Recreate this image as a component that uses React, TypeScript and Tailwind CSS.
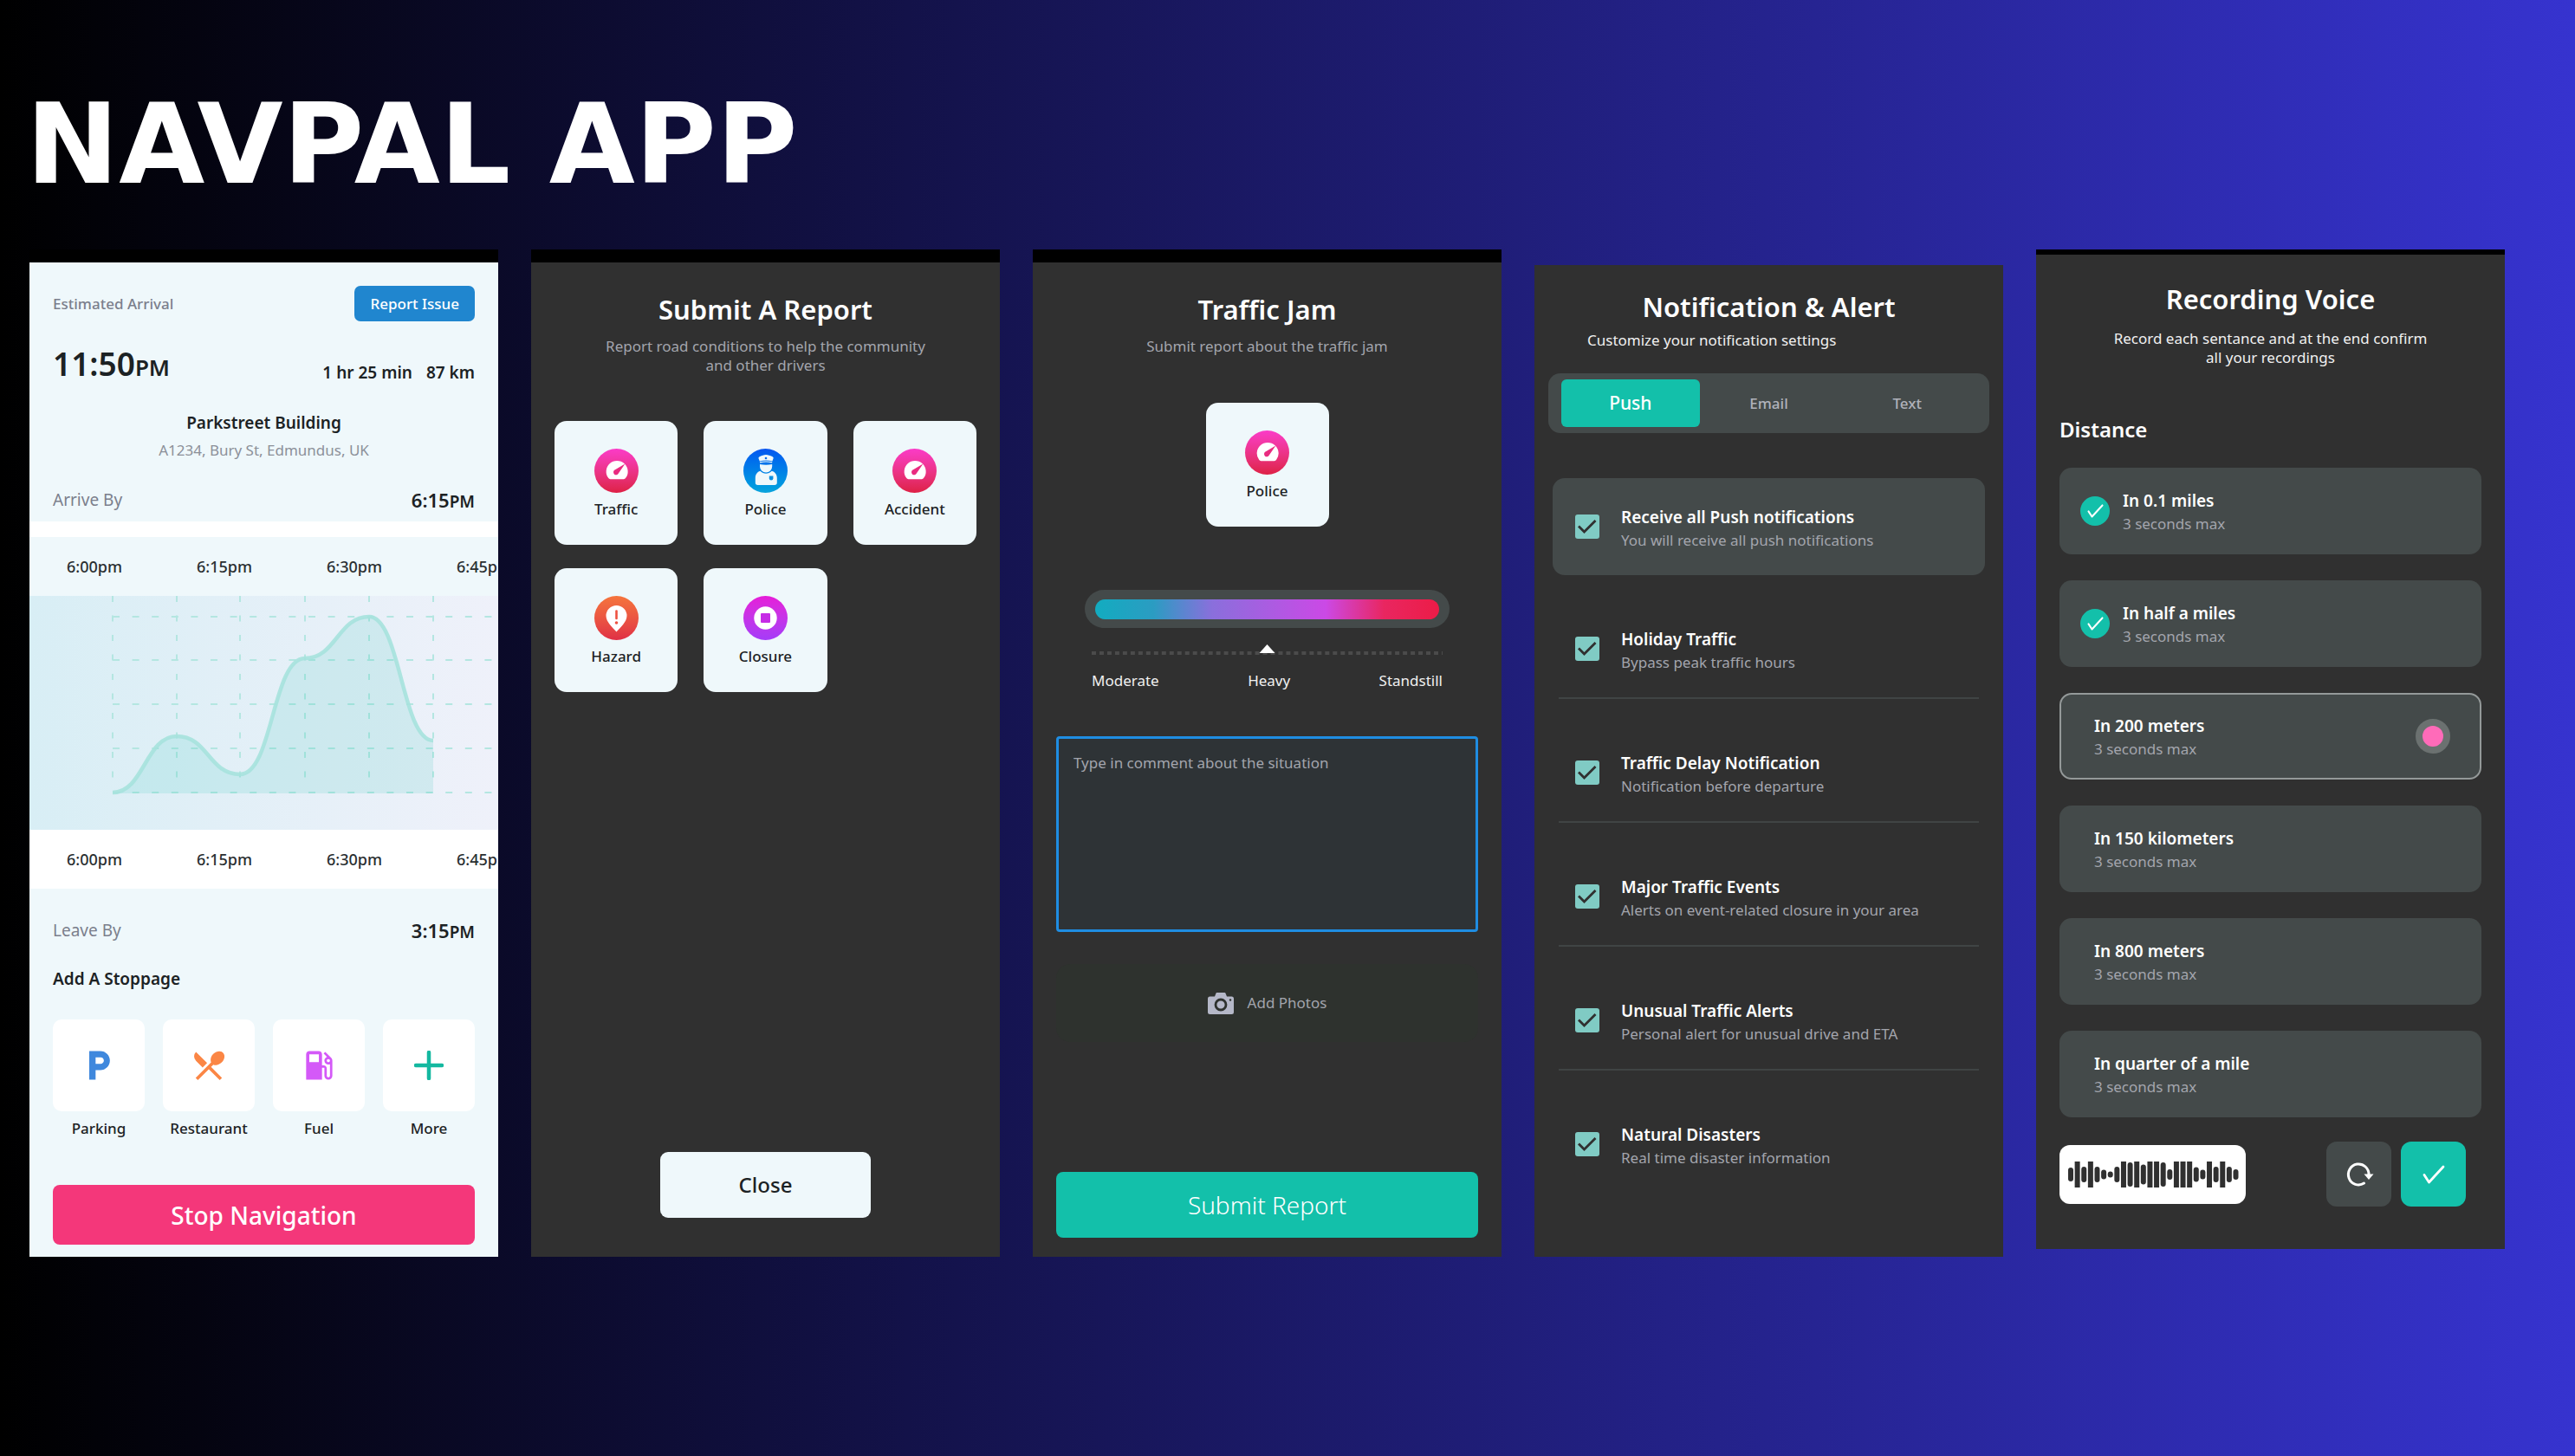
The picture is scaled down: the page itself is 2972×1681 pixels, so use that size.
import type { ReactNode } from "react";
import { MdLocalGasStation, MdLocalParking, MdRestaurantMenu } from "react-icons/md";

/* ---------- Icons ---------- */

function GaugeIcon() {
  return (
    <svg viewBox="0 0 51 51" className="size-[51px]" aria-hidden="true">
      <path
        d="M18.4 35.2c-.9 0-1.6-.4-2.1-1.1A12.5 12.5 0 1 1 36 34.1c-.5.7-1.2 1.1-2.1 1.1z"
        fill="#fff"
      />
      <path d="M35.4 17.6 28 28.3a3.1 3.1 0 1 1-4-4z" fill="#e92c80" />
    </svg>
  );
}

function PoliceIcon() {
  return (
    <svg viewBox="0 0 51 51" className="size-[51px]" aria-hidden="true">
      <path
        d="M17.6 11.6c-.4-1.2.3-2 1.5-2.5C21.3 8.1 23.5 7 26 7s4.900 1.100 7.200 2.100c1.200.5 1.800 1.300 1.300 2.500L33.400 14.400c-4.800-1.300-9.800-1.300-14.600 0z"
        fill="#eff8fb"
      />
      <circle cx="26" cy="11" r="1.3" fill="#0b6cec" />
      <path d="M19 15.900c4.600-1.200 9.600-1.200 14.200 0" stroke="#eff8fb" strokeWidth="1.1" fill="none" />
      <path d="M19 18c4.500 1 9.600 1 14.200 0v2.400a7.100 7.100 0 0 1-14.200 0z" fill="#eff8fb" />
      <path
        d="M19.400 25.800c3.800 4 9.600 4 13.400 0 3.600 1 6 4 6 8v5.400c0 1.800-1 2.800-2.800 2.800H16.600c-1.800 0-2.800-1-2.800-2.800v-5.400c0-4 2.200-7 5.600-8z"
        fill="#eff8fb"
      />
      <path d="M29.800 31.500h4.600v2.800a2.300 2.300 0 0 1-4.600 0z" fill="#0b8fe0" />
    </svg>
  );
}

function HazardIcon() {
  return (
    <svg viewBox="0 0 51 51" className="size-[51px]" aria-hidden="true">
      <path d="M25.500 41.500C21 36.500 13.500 30 13.500 23a12 12 0 0 1 24 0c0 7-7.500 13.500-12 18.500z" fill="#fff" />
      <path d="M25.500 17.500v8.500" stroke="#ee5240" strokeWidth="2.6" strokeLinecap="round" />
      <circle cx="25.5" cy="31" r="1.800" fill="#ee5240" />
    </svg>
  );
}

function ClosureIcon() {
  return (
    <svg viewBox="0 0 51 51" className="size-[51px]" aria-hidden="true">
      <circle cx="25.5" cy="25.5" r="13.2" fill="#fff" />
      <rect x="20" y="20" width="11" height="11" rx="1" fill="#c62be6" />
    </svg>
  );
}

function PlusIcon() {
  return (
    <svg viewBox="0 0 34 34" className="size-[34px]" aria-hidden="true">
      <path d="M17 2v30M2 17h30" stroke="#14b8a0" strokeWidth="4.5" strokeLinecap="round" />
    </svg>
  );
}

function CameraIcon() {
  return (
    <svg viewBox="0 0 30 25" className="h-[25px] w-[30px]" aria-hidden="true">
      <path
        d="M2.500 4.500H8L9.200 1.400C9.500.5 10.100 0 11 0h8c.9 0 1.500.5 1.800 1.400L22 4.500h5.500A2.500 2.500 0 0 1 30 7v15.500a2.500 2.500 0 0 1-2.500 2.500h-25A2.500 2.500 0 0 1 0 22.500V7a2.500 2.500 0 0 1 2.500-2.500z"
        fill="#b5b8c8"
      />
      <circle cx="15" cy="14" r="6" fill="none" stroke="#2e322e" strokeWidth="2.8" />
      <circle cx="26" cy="8.5" r="1.200" fill="#2e322e" />
    </svg>
  );
}

function TickIcon({ className }: { className: string }) {
  return (
    <svg viewBox="0 0 26 22" className={className} aria-hidden="true">
      <path
        d="M2 11.500 7.500 20 24 2"
        fill="none"
        stroke="#fff"
        strokeWidth="2.8"
        strokeLinecap="round"
        strokeLinejoin="round"
      />
    </svg>
  );
}

function RedoIcon() {
  return (
    <svg viewBox="0 0 34 32" className="h-[32px] w-[34px]" aria-hidden="true">
      <path d="M22.500 26.100A11.800 12 0 1 1 28 16.500" fill="none" stroke="#fff" strokeWidth="3" strokeLinecap="round" />
      <path d="M22.500 15.500h11L28 22z" fill="#fff" />
    </svg>
  );
}

const waveBars = [
  16, 30, 18, 30, 18, 11, 7, 18, 30, 28, 30, 23, 30, 30, 28, 12, 30, 30, 30, 17, 11, 30, 18, 30, 18, 12,
];

function WaveForm() {
  return (
    <svg viewBox="0 0 198 30" className="h-[30px] w-[198px]" role="img" aria-label="Recorded sound">
      {waveBars.map((h, i) => (
        <rect
          key={i}
          x={1 + i * 7.62}
          y={15 - h / 2}
          width="6"
          height={h}
          rx={h === 30 ? 0 : 3}
          fill="#303030"
        />
      ))}
    </svg>
  );
}

/* ---------- Shared parts ---------- */

function Heading({ children }: { children: ReactNode }) {
  return <h2 className="text-center text-[31px] leading-[40px] font-semibold text-white">{children}</h2>;
}

const categories = {
  Gauge: { icon: <GaugeIcon />, tint: "bg-linear-to-b from-[#fb3bc8] to-[#de2045]" },
  Police: { icon: <PoliceIcon />, tint: "bg-linear-to-b from-[#0b55f0] to-[#0da4dc]" },
  Hazard: { icon: <HazardIcon />, tint: "bg-linear-to-b from-[#f5743c] to-[#e02f45]" },
  Closure: { icon: <ClosureIcon />, tint: "bg-linear-to-b from-[#e61bd8] to-[#a53bf8]" },
};

function CategoryCard({ kind, label }: { kind: keyof typeof categories; label: string }) {
  const { icon, tint } = categories[kind];
  return (
    <button
      type="button"
      className="flex h-[143px] min-w-[142px] flex-col items-center rounded-[14px] bg-[#eff8fb] pt-8 text-[17px] leading-6 font-medium text-[#1c2224]"
    >
      <span className={`mb-[7px] block size-[51px] rounded-full ${tint}`}>{icon}</span>
      {label}
    </button>
  );
}

/* ---------- Navigation screen ---------- */

const hours = ["6:00pm", "6:15pm", "6:30pm", "6:45pm"];

function TimeRow({ className }: { className: string }) {
  return (
    <div className={`flex h-[68px] items-center overflow-hidden text-[18px] font-medium text-[#2a2f31] ${className}`}>
      {hours.map((h) => (
        <span key={h} className="w-[150px] shrink-0 text-center">
          {h}
        </span>
      ))}
    </div>
  );
}

const curve =
  "M96 227C132 227 134 162 170 162S207 206 243 206C281 206 280 72 318 72C354 72 356 24 392 24C428 24 430 167 466 167";

function TrafficChart() {
  return (
    <div className="h-[270px] overflow-hidden bg-linear-to-r from-[#d8eef5] to-[#eff1fa]">
      <svg viewBox="0 0 541 270" className="h-[270px] w-[541px]" role="img" aria-label="Traffic by departure time">
        <g stroke="#b4e6e1" strokeWidth="2">
          {[96, 170, 243, 318, 392, 466].map((x) => (
            <path key={x} d={`M${x} 0V212`} strokeDasharray="7 15.5" />
          ))}
          {[24, 74, 125, 176, 227].map((y) => (
            <path key={y} d={`M96 ${y}H534`} strokeDasharray="8 14.6" />
          ))}
        </g>
        <path d={`${curve}V228H96z`} fill="#14c0aa" fillOpacity="0.12" />
        <path d={curve} fill="none" stroke="#a6e2dd" strokeOpacity="0.9" strokeWidth="4.5" />
      </svg>
    </div>
  );
}

const stops = [
  { label: "Parking", icon: <MdLocalParking className="size-11 text-[#3f88dd]" /> },
  { label: "Restaurant", icon: <MdRestaurantMenu className="size-11 text-[#fb8645]" /> },
  { label: "Fuel", icon: <MdLocalGasStation className="size-11 text-[#d459f8]" /> },
  { label: "More", icon: <PlusIcon /> },
];

function NavigationScreen() {
  return (
    <section className="flex flex-col border-t-[15px] border-black bg-[#eff8fb] text-[#1c2224]">
      <div className="px-[27px] pt-[27px] pb-[9px]">
        <div className="flex items-center justify-between">
          <span className="text-[17px] font-medium text-[#7b7f8c]">Estimated Arrival</span>
          <button
            type="button"
            className="h-[41px] rounded-[7px] bg-[#2086cf] px-[18px] text-[17px] font-medium text-white"
          >
            Report Issue
          </button>
        </div>
        <div className="mt-[25px] flex items-end justify-between">
          <span className="text-[37px] leading-[48px] font-semibold">
            11:50<span className="text-[26px] leading-none">PM</span>
          </span>
          <span className="flex gap-4 text-[19px] leading-7 font-semibold">
            <span>1 hr 25 min</span>
            <span>87 km</span>
          </span>
        </div>
        <p className="mt-[29px] text-center text-[19px] leading-[30px] font-semibold">Parkstreet Building</p>
        <p className="mt-[2px] text-center text-[17px] leading-[30px] text-[#8c9099]">
          A1234, Bury St, Edmundus, UK
        </p>
        <div className="mt-[26px] flex h-8 items-center justify-between">
          <span className="text-[19px] text-[#7b7f8c]">Arrive By</span>
          <span className="text-[22px] font-semibold">
            6:15<span className="text-[19px] leading-none">PM</span>
          </span>
        </div>
      </div>
      <div className="h-[18px] bg-white" />
      <TimeRow className="bg-[#eff8fb]" />
      <TrafficChart />
      <TimeRow className="bg-white" />
      <div className="px-[27px] pt-8 pb-[14px]">
        <div className="flex h-8 items-center justify-between">
          <span className="text-[19px] text-[#7b7f8c]">Leave By</span>
          <span className="text-[22px] font-semibold">
            3:15<span className="text-[19px] leading-none">PM</span>
          </span>
        </div>
        <h3 className="mt-[26px] text-[19px] leading-7 font-semibold">Add A Stoppage</h3>
        <div className="mt-[33px] grid grid-cols-4 gap-[21px]">
          {stops.map((s) => (
            <button key={s.label} type="button" className="flex flex-col items-center gap-2">
              <span className="flex h-[106px] w-full items-center justify-center rounded-[10px] bg-white">
                {s.icon}
              </span>
              <span className="text-[17px] leading-6 font-medium">{s.label}</span>
            </button>
          ))}
        </div>
        <button
          type="button"
          className="mt-[53px] h-[69px] w-full rounded-lg bg-[#f4377a] text-[28px] font-medium text-white"
        >
          Stop Navigation
        </button>
      </div>
    </section>
  );
}

/* ---------- Report screens ---------- */

function ReportScreen() {
  return (
    <section className="flex flex-col border-t-[15px] border-black bg-[#303030] px-[27px] pt-[34px] pb-[45px]">
      <Heading>Submit A Report</Heading>
      <p className="mt-3 text-center text-[17px] leading-[22px] text-[#a3a5ad]">
        Report road conditions to help the community
        <br />
        and other drivers
      </p>
      <div className="mt-[53px] grid grid-cols-3 gap-x-[30px] gap-y-[27px]">
        <CategoryCard kind="Gauge" label="Traffic" />
        <CategoryCard kind="Police" label="Police" />
        <CategoryCard kind="Gauge" label="Accident" />
        <CategoryCard kind="Hazard" label="Hazard" />
        <CategoryCard kind="Closure" label="Closure" />
      </div>
      <button
        type="button"
        className="mt-auto h-[76px] w-1/2 self-center rounded-[9px] bg-[#eff8fb] text-[24px] font-medium text-[#1c2224]"
      >
        Close
      </button>
    </section>
  );
}

function TrafficJamScreen() {
  return (
    <section className="flex flex-col border-t-[15px] border-black bg-[#303030] px-[27px] pt-[34px] pb-[22px]">
      <Heading>Traffic Jam</Heading>
      <p className="mt-3 text-center text-[17px] leading-[22px] text-[#a3a5ad]">
        Submit report about the traffic jam
      </p>
      <div className="mt-[54px] flex justify-center">
        <CategoryCard kind="Gauge" label="Police" />
      </div>
      <div className="mx-[33px] mt-[73px] flex h-[44px] items-center rounded-full bg-[#444a4a] px-3">
        <input
          type="range"
          aria-label="Traffic severity"
          min={0}
          max={2}
          defaultValue={1}
          className="h-[23px] w-full appearance-none rounded-full bg-[linear-gradient(90deg,#12acc0_0%,#2b9cc2_17%,#8a6fdc_34%,#cb49e6_67%,#e92660_84%,#ec1c47_100%)] [&::-webkit-slider-thumb]:appearance-none [&::-webkit-slider-thumb]:opacity-0"
        />
      </div>
      <div className="mx-[41px] mt-[19px]">
        <svg viewBox="0 0 406 12" className="h-3 w-full" aria-hidden="true">
          <path d="M0 10H406" stroke="#4b4b4b" strokeWidth="4" strokeDasharray="5 4" />
          <path d="M203 0 212 10H194z" fill="#fff" />
        </svg>
        <div className="mt-[18px] flex justify-between text-[17px] leading-6 text-[#f0f0f0]">
          <span>Moderate</span>
          <span>Heavy</span>
          <span>Standstill</span>
        </div>
      </div>
      <textarea
        aria-label="Comment"
        placeholder="Type in comment about the situation"
        className="mt-[52px] h-[226px] w-full resize-none rounded-[4px] border-[3px] border-[#1f8de2] bg-[#2e3336] px-[17px] py-4 text-[17px] leading-6 text-white placeholder:text-[#a3a5ad]"
      />
      <button
        type="button"
        className="mt-[37px] flex h-[90px] items-center justify-center gap-4 rounded-2xl bg-[#2e322e] text-[17px] text-[#a3a5ad]"
      >
        <CameraIcon />
        Add Photos
      </button>
      <button type="button" className="mt-auto h-[76px] rounded-lg bg-[#13c0aa] text-[28px] font-light text-white">
        Submit Report
      </button>
    </section>
  );
}

/* ---------- Notification screen ---------- */

const alerts = [
  ["Receive all Push notifications", "You will receive all push notifications"],
  ["Holiday Traffic", "Bypass peak traffic hours"],
  ["Traffic Delay Notification", "Notification before departure"],
  ["Major Traffic Events", "Alerts on event-related closure in your area"],
  ["Unusual Traffic Alerts", "Personal alert for unusual drive and ETA"],
  ["Natural Disasters", "Real time disaster information"],
];

function AlertRow({ title, text, className }: { title: string; text: string; className: string }) {
  return (
    <label className={`flex items-center gap-[25px] ${className}`}>
      <span className="grid shrink-0">
        <input
          type="checkbox"
          defaultChecked
          className="col-start-1 row-start-1 size-7 appearance-none rounded-[3px] bg-[#80cbc4]"
        />
        <svg viewBox="0 0 28 28" className="pointer-events-none col-start-1 row-start-1 size-7" aria-hidden="true">
          <path d="M4 13.500 10.500 20 23.500 7" fill="none" stroke="#303030" strokeWidth="2.8" />
        </svg>
      </span>
      <span className="pt-1">
        <span className="block text-[19px] leading-7 font-semibold text-white">{title}</span>
        <span className="block text-[17px] leading-[26px] text-[#a3a5ad]">{text}</span>
      </span>
    </label>
  );
}

function NotificationScreen() {
  const [[firstTitle, firstText], ...others] = alerts;
  return (
    <section className="mt-[18px] bg-[#303030] px-4 pt-7">
      <Heading>Notification &amp; Alert</Heading>
      <p className="mt-[7px] pl-[45px] text-[17px] leading-6 text-[#f0f0f0]">Customize your notification settings</p>
      <div
        role="tablist"
        aria-label="Channel"
        className="mt-[26px] grid grid-cols-3 rounded-[14px] bg-[#444a4a] px-[15px] py-[7px] text-[17px] font-medium text-[#b0b2ba]"
      >
        <button
          type="button"
          role="tab"
          aria-selected="true"
          className="h-[55px] rounded-md bg-[#13c0aa] text-[21px] text-white"
        >
          Push
        </button>
        <button type="button" role="tab" aria-selected="false">
          Email
        </button>
        <button type="button" role="tab" aria-selected="false">
          Text
        </button>
      </div>
      <div className="mt-[52px] flex flex-col gap-[29px]">
        <AlertRow
          title={firstTitle}
          text={firstText}
          className="mx-[5px] h-[112px] rounded-[14px] bg-[#444a4a] pl-[26px]"
        />
        {others.map(([title, text]) => (
          <AlertRow
            key={title}
            title={title}
            text={text}
            className="mx-3 h-[114px] border-b-2 border-[#404444] pl-[19px] last:border-transparent"
          />
        ))}
      </div>
    </section>
  );
}

/* ---------- Recording screen ---------- */

const clips = [
  { title: "In 0.1 miles", state: "done" },
  { title: "In half a miles", state: "done" },
  { title: "In 200 meters", state: "recording" },
  { title: "In 150 kilometers", state: "open" },
  { title: "In 800 meters", state: "open" },
  { title: "In quarter of a mile", state: "open" },
];

function ClipRow({ title, state }: { title: string; state: string }) {
  const done = state === "done";
  const recording = state === "recording";
  return (
    <button
      type="button"
      className={`flex h-[100px] w-full items-center rounded-[14px] border-2 bg-[#444a4a] text-left ${
        recording ? "border-[#949999]" : "border-transparent"
      } ${done ? "gap-[15px] pl-[22px]" : "pl-[38px]"}`}
    >
      {done && (
        <span className="flex size-[34px] items-center justify-center rounded-full bg-[#13c0aa]">
          <TickIcon className="h-[16px] w-[19px]" />
        </span>
      )}
      <span className="flex-1 pt-[2px]">
        <span className="block text-[19px] leading-7 font-semibold text-white">{title}</span>
        <span className="block text-[17px] leading-[26px] text-[#a3a5ad]">3 seconds max</span>
      </span>
      {recording && <span className="mr-[34px] size-10 rounded-full border-8 border-[#6b7170] bg-[#ff6bb9]" />}
    </button>
  );
}

function RecordingScreen() {
  return (
    <section className="self-start border-t-[6px] border-black bg-[#303030] px-[27px] pt-[31px] pb-[49px]">
      <Heading>Recording Voice</Heading>
      <p className="mt-[15px] text-center text-[17px] leading-[22px] text-[#f0f0f0]">
        Record each sentance and at the end confirm
        <br />
        all your recordings
      </p>
      <h3 className="mt-14 text-[24px] leading-8 font-semibold text-white">Distance</h3>
      <div className="mt-7 flex flex-col gap-[30px]">
        {clips.map((c) => (
          <ClipRow key={c.title} title={c.title} state={c.state} />
        ))}
      </div>
      <div className="mt-7 flex items-center gap-[11px] pr-[18px]">
        <div className="mr-auto flex h-[68px] w-[215px] items-center justify-center rounded-xl bg-white">
          <WaveForm />
        </div>
        <button
          type="button"
          aria-label="Record again"
          className="flex size-[75px] items-center justify-center rounded-xl bg-[#444a4a]"
        >
          <RedoIcon />
        </button>
        <button
          type="button"
          aria-label="Confirm"
          className="flex size-[75px] items-center justify-center rounded-xl bg-[#13c0aa]"
        >
          <TickIcon className="h-[22px] w-[26px]" />
        </button>
      </div>
    </section>
  );
}

export default function App() {
  return (
    <main className="min-h-screen bg-linear-to-r/srgb from-black to-[#3633cf] font-['Noto_Sans',sans-serif]">
      <h1 className="pt-[103px] pb-[57px] pl-[30px] font-['DejaVu_Sans',sans-serif] text-[128px] leading-none font-bold text-white">
        NAVPAL APP
      </h1>
      <div className="grid grid-cols-5 gap-[38px] pr-[81px] pl-[34px]">
        <NavigationScreen />
        <ReportScreen />
        <TrafficJamScreen />
        <NotificationScreen />
        <RecordingScreen />
      </div>
    </main>
  );
}
